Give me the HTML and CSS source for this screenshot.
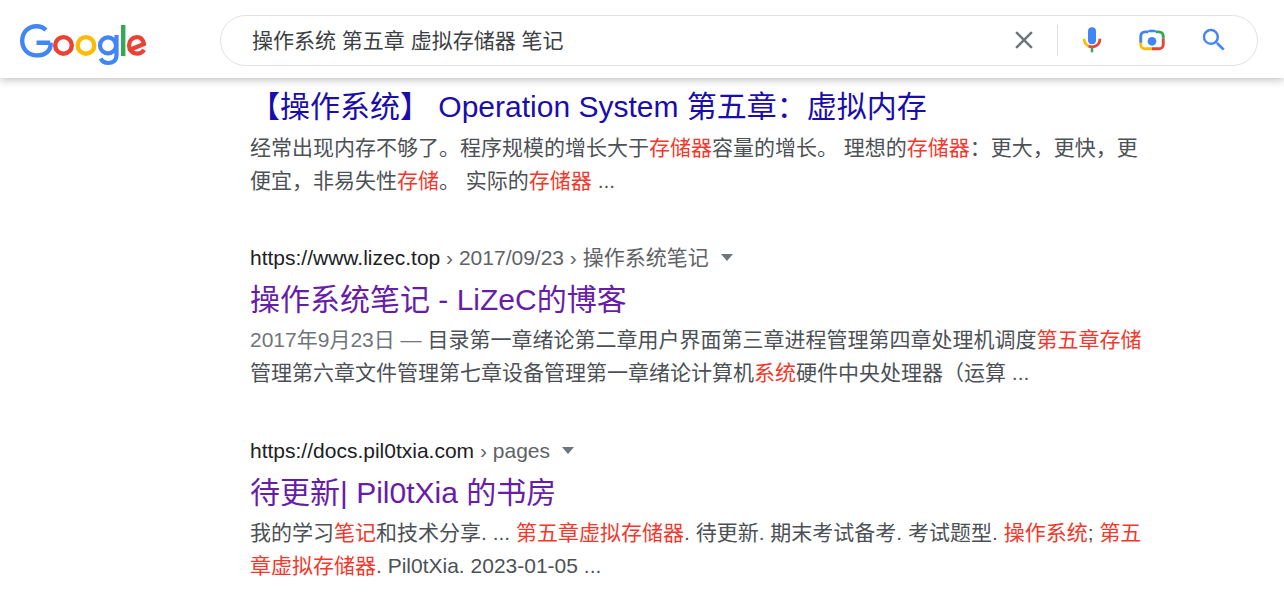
FILE: index.html
```html
<!DOCTYPE html>
<html lang="zh">
<head>
<meta charset="utf-8">
<title>操作系统 第五章 虚拟存储器 笔记</title>
<link rel="stylesheet" href="styles.css">
</head>
<body>
<header class="topbar">
  <svg class="logo" width="130" height="44" viewBox="0 0 130 44" role="img" aria-label="Google">
    <path d="M31.2 18.8H17.6M31.6 18.8c.7 7.200-4.400 12.600-14 12.600C9.300 31.400 3.200 25.300 3.200 16.800S9.300 2.200 17.600 2.200c4 0 7 1.500 9.400 3.800" fill="none" stroke="#4285f4" stroke-width="4.400"/>
    <circle cx="44.500" cy="21.400" r="8.300" fill="none" stroke="#ea4335" stroke-width="4.400"/>
    <circle cx="67" cy="21.400" r="8.300" fill="none" stroke="#fbbc05" stroke-width="4.400"/>
    <circle cx="89" cy="21.400" r="8" fill="none" stroke="#4285f4" stroke-width="4.200"/>
    <path d="M97.500 11v20c0 5.500-3.500 8-8.300 8-3.700 0-6.300-2-7.500-4.500" fill="none" stroke="#4285f4" stroke-width="4.200"/>
    <rect x="102" y="1" width="4.400" height="31" fill="#34a853"/>
    <path d="M110.500 26 125 20c-1-4.500-3.800-6.800-7-6.800-4.600 0-8 3.600-8 8.200s3.400 8.300 8.200 8.300c3 0 5.300-1.300 7-3.800" fill="none" stroke="#ea4335" stroke-width="4.200"/>
  </svg>
  <div class="searchbox">
    <span class="query">操作系统 第五章 虚拟存储器 笔记</span>
    <svg class="icon clear" width="30" height="30" viewBox="0 0 24 24"><path fill="#70757a" d="M19 6.410 17.590 5 12 10.590 6.410 5 5 6.410 10.590 12 5 17.590 6.410 19 12 13.410 17.590 19 19 17.590 13.410 12z"/></svg>
    <span class="divider"></span>
    <svg class="icon mic" width="30" height="30" viewBox="0 0 24 24">
      <rect x="8.800" y="1.800" width="6.400" height="13.600" rx="3.200" fill="#4285f4"/>
      <path d="M5.700 11c0 2.700 1.500 4.800 3.500 5.800" fill="none" stroke="#fbbc05" stroke-width="2.200"/>
      <path d="M9.200 16.800c2 1 3.800 1 5.800 0 2-1 3.300-3 3.300-5.800" fill="none" stroke="#ea4335" stroke-width="2.200"/>
      <rect x="11" y="17.800" width="2" height="4" fill="#34a853"/>
    </svg>
    <svg class="icon lens" width="30" height="30" viewBox="0 0 24 24">
      <circle cx="12" cy="13" r="3.500" fill="#4285f4"/>
      <path d="M8.500 5.800 9.500 3.800h5l1 2z" fill="#4285f4"/>
      <path d="M15 5.500h2.500c2 0 3.500 1.500 3.500 3.500v2" fill="none" stroke="#34a853" stroke-width="2.300"/>
      <path d="M21 11v4.500c0 2-1.500 3.500-3.500 3.500H12" fill="none" stroke="#ea4335" stroke-width="2.300"/>
      <path d="M3 13.500V15.500c0 2 1.500 3.500 3.500 3.500H12" fill="none" stroke="#fbbc05" stroke-width="2.300"/>
      <path d="M3 14V9c0-2 1.500-3.500 3.500-3.500H9" fill="none" stroke="#4285f4" stroke-width="2.300"/>
    </svg>
    <svg class="icon search" width="30" height="30" viewBox="0 0 24 24"><path fill="#4285f4" d="M15.500 14h-.79l-.28-.27A6.470 6.470 0 0 0 16 9.500 6.500 6.500 0 1 0 9.500 16c1.610 0 3.090-.59 4.230-1.570l.27.28v.79l5 4.990L20.490 19l-4.990-5zm-6 0C7.010 14 5 11.990 5 9.500S7.010 5 9.500 5 14 7.010 14 9.500 11.990 14 9.500 14z"/></svg>
  </div>
</header>
<main class="results">
  <article class="result first">
    <h3 class="title unvisited"><a>【操作系统】 Operation System 第五章：虚拟内存</a></h3>
    <p class="snippet">经常出现内存不够了。程序规模的增长大于<em>存储器</em>容量的增长。 理想的<em>存储器</em>：更大，更快，更<br>便宜，非易失性<em>存储</em>。 实际的<em>存储器</em> ...</p>
  </article>
  <article class="result">
    <div class="cite"><span class="host">https://www.lizec.top</span><span class="path"> › 2017/09/23 › 操作系统笔记</span><span class="caret"></span></div>
    <h3 class="title"><a>操作系统笔记 - LiZeC的博客</a></h3>
    <p class="snippet"><span class="date">2017年9月23日 — </span>目录第一章绪论第二章用户界面第三章进程管理第四章处理机调度<em>第五章存储</em><br>管理第六章文件管理第七章设备管理第一章绪论计算机<em>系统</em>硬件中央处理器（运算 ...</p>
  </article>
  <article class="result">
    <div class="cite"><span class="host">https://docs.pil0txia.com</span><span class="path"> › pages</span><span class="caret"></span></div>
    <h3 class="title"><a>待更新| Pil0tXia 的书房</a></h3>
    <p class="snippet">我的学习<em>笔记</em>和技术分享. ... <em>第五章虚拟存储器</em>. 待更新. 期末考试备考. 考试题型. <em>操作系统</em>; <em>第五</em><br><em>章虚拟存储器</em>. Pil0tXia. 2023-01-05 ...</p>
  </article>
</main>
</body>
</html>
```
FILE: styles.css
```css
* { box-sizing: border-box; }
html, body { margin: 0; padding: 0; height: 100%; overflow: hidden; }
body {
  background: #fff;
  color: #4d5156;
  font-family: "Liberation Sans", "Noto Sans CJK SC", sans-serif;
}
.topbar {
  height: 78px;
  display: flex;
  align-items: center;
  padding: 0 26px 0 19px;
  background: #fff;
  box-shadow: 0 2px 8px rgba(32, 33, 36, 0.28);
}
.logo { flex: none; margin: 14px 71px 0 0; }
.searchbox {
  flex: 1;
  height: 51px;
  display: flex;
  align-items: center;
  padding: 0 28px 0 31px;
  border: 1px solid #dfe1e5;
  border-radius: 26px;
  margin-top: 2px;
}
.query { flex: 1; font-size: 21px; color: #3c4043; position: relative; top: -1px; }
.icon { flex: none; display: block; }
.clear { margin-right: 18px; position: relative; left: 1px; }
.divider { width: 1px; height: 31px; background: #dfe1e5; margin-right: 20px; position: relative; left: 1px; }
.mic { margin-right: 30px; }
.lens { margin-right: 32px; }
.results { padding: 9px 0 0 250px; width: 1150px; }
.result { margin-bottom: 46px; }
.first { margin-bottom: 45px; }
.result:last-child { margin-bottom: 0; }
.cite { height: 32px; line-height: 32px; font-size: 21px; white-space: nowrap; }
.host { color: #202124; }
.path { color: #5f6368; }
.caret {
  display: inline-block;
  width: 0;
  height: 0;
  margin-left: 12px;
  vertical-align: 4px;
  border-left: 6px solid transparent;
  border-right: 6px solid transparent;
  border-top: 7px solid #70757a;
}
.title { margin: 0; font-size: 30px; line-height: 40px; font-weight: 400; color: #681da8; }
.cite + .title { margin-top: 6px; }
.unvisited { color: #1a0dab; }
.snippet { margin: 3px 0 0; font-size: 21px; line-height: 33px; white-space: nowrap; }
.first .snippet { margin-top: 4px; }
.snippet em { font-style: normal; color: #f2382c; }
.date { color: #70757a; }
```
